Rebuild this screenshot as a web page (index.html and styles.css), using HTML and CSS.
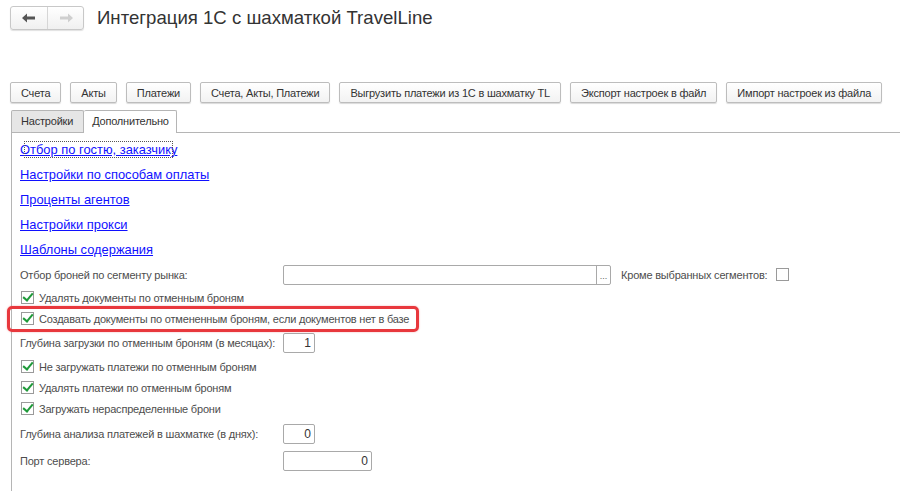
FILE: index.html
```html
<!DOCTYPE html>
<html lang="ru">
<head>
    <meta charset="UTF-8">
    <title>Интеграция 1С с шахматкой TravelLine</title>
    <link rel="stylesheet" href="styles.css">
</head>
<body>
    <div class="form-header">
        <div class="nav-group">
            <button class="nav-btn">
                <svg width="14" height="10" viewBox="0 0 14 10"><path d="M0 5 L5 0.5 L5 3.5 L13 3.5 L13 6.5 L5 6.5 L5 9.5 Z" fill="#555"/></svg>
            </button>
            <button class="nav-btn disabled">
                <svg width="14" height="10" viewBox="0 0 14 10"><path d="M14 5 L9 0.5 L9 3.5 L1 3.5 L1 6.5 L9 6.5 L9 9.5 Z" fill="#cfcfcf"/></svg>
            </button>
        </div>
        <h1 class="form-title">Интеграция 1С с шахматкой TravelLine</h1>
    </div>

    <div class="toolbar">
        <button class="cmd-btn">Счета</button>
        <button class="cmd-btn">Акты</button>
        <button class="cmd-btn">Платежи</button>
        <button class="cmd-btn">Счета, Акты, Платежи</button>
        <button class="cmd-btn">Выгрузить платежи из 1С в шахматку TL</button>
        <button class="cmd-btn">Экспорт настроек в файл</button>
        <button class="cmd-btn">Импорт настроек из файла</button>
    </div>

    <div class="tabs">
        <div class="tab">Настройки</div>
        <div class="tab active">Дополнительно</div>
    </div>

    <div class="tab-panel">
        <div class="links">
            <a href="#" class="link focused">Отбор по гостю, заказчику</a>
            <a href="#" class="link">Настройки по способам оплаты</a>
            <a href="#" class="link">Проценты агентов</a>
            <a href="#" class="link">Настройки прокси</a>
            <a href="#" class="link">Шаблоны содержания</a>
        </div>

        <div class="field-row">
            <span class="label">Отбор броней по сегменту рынка:</span>
            <div class="input select-input">
                <span class="select-btn">...</span>
            </div>
            <span class="label side-label">Кроме выбранных сегментов:</span>
            <span class="check"></span>
        </div>

        <div class="check-row">
            <span class="check checked"></span>
            <span class="label">Удалять документы по отменным броням</span>
        </div>
        <div class="check-row marked">
            <span class="check checked"></span>
            <span class="label">Создавать документы по отмененным броням, если документов нет в базе</span>
        </div>

        <div class="field-row row-deep">
            <span class="label">Глубина загрузки по отменным броням (в месяцах):</span>
            <div class="input num-input">1</div>
        </div>

        <div class="check-row">
            <span class="check checked"></span>
            <span class="label">Не загружать платежи по отменным броням</span>
        </div>
        <div class="check-row">
            <span class="check checked"></span>
            <span class="label">Удалять платежи по отменным броням</span>
        </div>
        <div class="check-row">
            <span class="check checked"></span>
            <span class="label">Загружать нераспределенные брони</span>
        </div>

        <div class="field-row row-analysis">
            <span class="label">Глубина анализа платежей в шахматке (в днях):</span>
            <div class="input num-input">0</div>
        </div>
        <div class="field-row">
            <span class="label">Порт сервера:</span>
            <div class="input port-input">0</div>
        </div>
    </div>
</body>
</html>
```

FILE: styles.css
```css
body {
    margin: 0;
    background: #fff;
    font-family: "Liberation Sans", Arial, sans-serif;
    color: #4d4d4d;
    height: 491px;
    overflow: hidden;
}

/* header with back/forward buttons */
.form-header {
    display: flex;
    align-items: center;
    height: 24px;
    padding: 6px 0 0 10px;
}
.nav-group {
    display: flex;
    border: 1px solid #c8c8c8;
    border-radius: 3px;
    box-shadow: 0 1px 1px rgba(0,0,0,0.12);
    background: linear-gradient(#ffffff, #f0f0f0);
}
.nav-btn {
    width: 36px;
    height: 22px;
    border: none;
    background: none;
    padding: 0;
    display: flex;
    align-items: center;
    justify-content: center;
}
.nav-btn + .nav-btn {
    border-left: 1px solid #d6d6d6;
}
.form-title {
    margin: 0 0 0 13px;
    font-size: 18.6px;
    font-weight: normal;
    color: #333;
    line-height: 24px;
}

/* command bar */
.toolbar {
    display: flex;
    gap: 9px;
    padding: 52px 0 0 10px;
}
.cmd-btn {
    height: 21px;
    padding: 0 10px;
    border: 1px solid #bdbdbd;
    border-radius: 2px;
    background: linear-gradient(#ffffff, #f2f2f2);
    box-shadow: 0 1px 1px rgba(0,0,0,0.15);
    font-family: "Liberation Sans", Arial, sans-serif;
    font-size: 11px;
    letter-spacing: -0.2px;
    white-space: nowrap;
    color: #333;
}

/* tabs */
.tabs {
    display: flex;
    padding: 7px 0 0 11px;
    height: 22px;
}
.tab {
    padding: 0 10px 0 9px;
    line-height: 21px;
    font-size: 11px;
    letter-spacing: -0.2px;
    color: #333;
    border: 1px solid #b5b5b5;
    border-bottom: none;
    background: #e6e6e6;
    border-radius: 2px 2px 0 0;
}
.tab.active {
    background: #fff;
    border-left: none;
    padding: 0 7px 0 8px;
    height: 22px;
    margin-bottom: -1px;
}
.tab-panel {
    margin-left: 11px;
    border-top: 1px solid #b5b5b5;
    border-left: 1px solid #b5b5b5;
    padding: 4px 0 0 8px;
    height: 360px;
}

/* links */
.links {
    display: flex;
    flex-direction: column;
    align-items: flex-start;
}
.link {
    height: 25px;
    line-height: 25px;
    font-size: 12.9px;
    color: #1010ff;
    text-decoration: underline;
}
.link.focused {
    outline: 1px dotted #555;
    outline-offset: -5px;
}

/* form fields */
.field-row {
    display: flex;
    align-items: center;
    height: 25px;
}
.row-deep {
    height: 27px;
}
.row-analysis {
    height: 29px;
}
.label {
    font-size: 11px;
    letter-spacing: -0.2px;
    color: #4d4d4d;
    white-space: nowrap;
}
.field-row > .label:first-child {
    width: 263px;
}
.input {
    height: 20px;
    box-sizing: border-box;
    border: 1px solid #a9a9a9;
    border-radius: 2px;
    font-size: 12px;
    color: #333;
    line-height: 18px;
    text-align: right;
    padding-right: 3px;
}
.select-input {
    width: 328px;
    display: flex;
    justify-content: flex-end;
    padding: 0;
}
.select-btn {
    width: 13px;
    border-left: 1px solid #a9a9a9;
    font-size: 9px;
    line-height: 20px;
    text-align: center;
    color: #666;
}
.side-label {
    margin: 0 9px 0 10px;
}
.num-input {
    width: 32px;
}
.port-input {
    width: 89px;
}

/* checkboxes */
.check-row {
    display: flex;
    align-items: center;
    height: 21px;
    padding-left: 1px;
    position: relative;
}
.check-row .label {
    margin-left: 5px;
}
.check {
    width: 13px;
    height: 13px;
    box-sizing: border-box;
    border: 1px solid #9a9a9a;
    background: #fff;
    position: relative;
}
.check.checked::after {
    content: "";
    position: absolute;
    left: 3px;
    top: -1px;
    width: 4px;
    height: 8px;
    border-right: 2px solid #1f9a3a;
    border-bottom: 2px solid #1f9a3a;
    transform: rotate(40deg);
}
.check-row.marked::before {
    content: "";
    position: absolute;
    left: -13px;
    top: -2px;
    width: 406px;
    height: 20px;
    border: 3px solid #e8383d;
    border-radius: 5px;
    box-shadow: 0 0 2px rgba(232,56,61,0.4);
}
```
